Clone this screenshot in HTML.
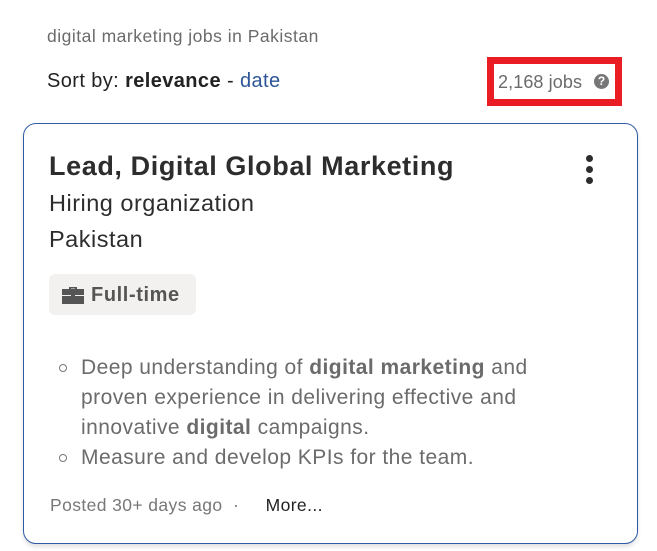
<!DOCTYPE html>
<html><head><style>
body{margin:0;width:657px;height:551px;background:#fff;font-family:"Liberation Sans",sans-serif;position:relative;overflow:hidden}
.a{position:absolute;white-space:nowrap}
</style></head><body>
<div class="a" style="left:47px;top:26px;font-size:17.5px;letter-spacing:0.5px;color:#6b6b6b">digital marketing jobs in Pakistan</div>
<div class="a" style="left:47px;top:70px;font-size:20px;letter-spacing:0.4px;color:#222">Sort by: <b>relevance</b> - <span style="color:#2c5697">date</span></div>
<div class="a" style="left:487px;top:57px;width:121px;height:35px;border:7px solid #ea1c24"></div>
<div class="a" style="left:498px;top:72px;font-size:18px;letter-spacing:0.1px;color:#6b6b6b">2,168 jobs</div>
<div class="a" style="left:594px;top:74px;width:15px;height:15px;border-radius:50%;background:#777;color:#fff;font-size:12px;font-weight:bold;text-align:center;line-height:15px">?</div>
<div class="a" style="left:23px;top:123px;width:613px;height:419px;border:1.5px solid #2f5aa6;border-radius:13px;box-shadow:0 3px 4px rgba(0,0,0,.12)"></div>
<div class="a" style="left:49px;top:151px;font-size:27px;letter-spacing:0.6px;font-weight:bold;color:#2d2d2d">Lead, Digital Global Marketing</div>
<div class="a" style="left:586px;top:155px;width:8px;height:28px">
<div style="position:absolute;left:0;top:0;width:7px;height:7px;border-radius:50%;background:#2d2d2d"></div>
<div style="position:absolute;left:0;top:11px;width:7px;height:7px;border-radius:50%;background:#2d2d2d"></div>
<div style="position:absolute;left:0;top:22px;width:7px;height:7px;border-radius:50%;background:#2d2d2d"></div></div>
<div class="a" style="left:49px;top:190px;font-size:23.5px;letter-spacing:0.5px;color:#2d2d2d">Hiring organization</div>
<div class="a" style="left:49px;top:226px;font-size:23.5px;letter-spacing:0.5px;color:#2d2d2d">Pakistan</div>
<div class="a" style="left:49px;top:274px;width:147px;height:41px;background:#f2f1f0;border-radius:6px"></div>
<svg class="a" style="left:62px;top:286px" width="22" height="18" viewBox="0 0 22 18"><path d="M7 3V1h8v2h-2V2.5H9V3z" fill="#555"/><rect x="0" y="3" width="22" height="6" fill="#555"/><rect x="0" y="10" width="22" height="8" fill="#555"/><rect x="9" y="8" width="4" height="3" fill="#555"/></svg>
<div class="a" style="left:91px;top:284px;font-size:20px;letter-spacing:0.6px;font-weight:bold;color:#555">Full-time</div>
<div class="a" style="left:59px;top:353px;font-size:21px;letter-spacing:0.45px;line-height:30px;color:#6b6b6b">
<div style="position:relative;padding-left:22px">
<span style="position:absolute;left:0;top:11px;width:6px;height:6px;border:1px solid #777;border-radius:50%"></span>
Deep understanding of <b>digital marketing</b> and<br>proven experience in delivering effective and<br>innovative <b>digital</b> campaigns.</div>
<div style="position:relative;padding-left:22px">
<span style="position:absolute;left:0;top:11px;width:6px;height:6px;border:1px solid #777;border-radius:50%"></span>
Measure and develop KPIs for the team.</div>
</div>
<div class="a" style="left:50px;top:495px;font-size:17.5px;letter-spacing:0.4px;color:#777">Posted 30+ days ago &nbsp;·&nbsp;&nbsp;&nbsp;&nbsp; <span style="color:#222">More...</span></div>
</body></html>
